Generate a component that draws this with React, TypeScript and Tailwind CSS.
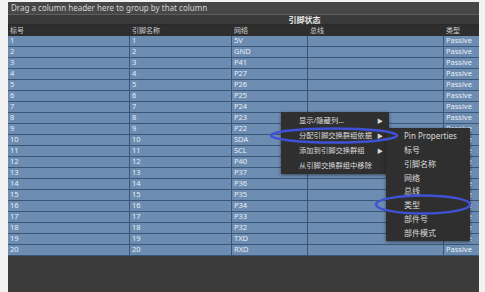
import React from "react";

const nets = [
  "5V", "GND", "P41", "P27", "P26", "P25", "P24", "P23", "P22", "SDA",
  "SCL", "P40", "P37", "P36", "P35", "P34", "P33", "P32", "TXD", "RXD",
];

const cols = "grid grid-cols-[122px_102px_76px_136px_35px]";
const font = { fontFamily: '"Noto Sans", "Noto Sans CJK SC", sans-serif' };

function Arrow() {
  return <span className="text-[6px] text-[#d8d8d8]">▶</span>;
}

export default function App() {
  return (
    <div className="relative h-[292px] w-[485px] overflow-hidden bg-[#f2f2f2]" style={font}>
      <div className="ml-[8px] mt-[2px] flex h-[290px] w-[471px] flex-col bg-[#3b3b3b]">
        {/* group-by bar */}
        <div className="flex h-[13px] items-center border-b border-[#5e5e5e] bg-[#474747] px-[3px] text-[8px] leading-none text-[#d4d4d4]">
          Drag a column header here to group by that column
        </div>
        {/* band */}
        <div className={`${cols} h-[10px] border-b border-[#2a2a2a] bg-[#3a3a3a]`}>
          <div />
          <div className="col-span-4 flex items-center justify-center text-[8px] font-bold leading-none text-[#e6e6e6]">
            引脚状态
          </div>
        </div>
        {/* column headers */}
        <div className={`${cols} h-[11px] bg-[#2e2e2e] text-[7px] leading-none text-[#cfcfcf]`}>
          {["标号", "引脚名称", "网络", "总线", "类型"].map((h) => (
            <div key={h} className="flex items-center px-[2px]">
              {h}
            </div>
          ))}
        </div>
        {/* rows */}
        <div className="flex flex-col">
          {nets.map((n, i) => (
            <div
              key={i}
              className={`${cols} h-[11px] border-b border-[#3a5676] bg-[#6c8cb1] text-[7.5px] leading-none text-[#e8eef6]`}
            >
              <div className="flex items-center border-r border-[#3a5676] px-[2px]">{i + 1}</div>
              <div className="flex items-center border-r border-[#3a5676] px-[2px]">{i + 1}</div>
              <div className="flex items-center border-r border-[#3a5676] px-[2px]">{n}</div>
              <div className="flex items-center border-r border-[#3a5676] px-[2px]" />
              <div className="flex items-center px-[2px]">Passive</div>
            </div>
          ))}
        </div>
      </div>

      {/* context menu */}
      <div className="absolute left-[281px] top-[112px] flex h-[62px] w-[108px] flex-col justify-center bg-[#2f2f2f] text-[7.3px] leading-none text-[#dcdcdc] shadow-[0_1px_3px_rgba(0,0,0,0.5)]">
        {[
          ["显示/隐藏列...", true],
          ["分配引脚交换群组依据", true],
          ["添加到引脚交换群组", true],
          ["从引脚交换群组中移除", false],
        ].map(([t, arrow]) => (
          <div key={t as string} className="flex h-[15px] items-center justify-between whitespace-nowrap pl-[18px] pr-[6px]">
            <span>{t}</span>
            {arrow && <Arrow />}
          </div>
        ))}
      </div>

      {/* sub menu */}
      <div className="absolute left-[386px] top-[128px] flex h-[113px] w-[84px] flex-col justify-center bg-[#2f2f2f] text-[8px] leading-none text-[#dcdcdc] shadow-[0_1px_3px_rgba(0,0,0,0.5)]">
        {["Pin Properties", "标号", "引脚名称", "网络", "总线", "类型", "部件号", "部件模式"].map((t) => (
          <div key={t} className="flex h-[13.8px] items-center whitespace-nowrap pl-[18px]">
            {t}
          </div>
        ))}
      </div>

      {/* hand-drawn ellipses */}
      <svg className="pointer-events-none absolute left-0 top-0" width="485" height="292">
        <ellipse cx="334" cy="135.5" rx="63" ry="7" fill="none" stroke="#3f52d6" strokeWidth="2.5" />
        <ellipse cx="423" cy="204.5" rx="47" ry="9" fill="none" stroke="#3f52d6" strokeWidth="2.5" />
      </svg>
    </div>
  );
}
